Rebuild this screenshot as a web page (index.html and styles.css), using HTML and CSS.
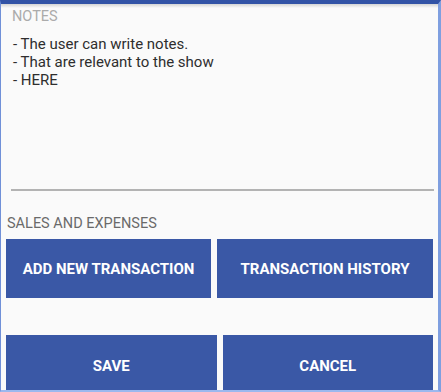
FILE: index.html
```html
<!DOCTYPE html>
<html>

<head>
    <title>Show notes</title>
    <link rel="stylesheet" href="styles.css">
</head>

<body>
    <div class="frame">
        <!-- Notes -->
        <div class="notes">
            <div class="notes-label">NOTES</div>
            <div class="notes-text">
                - The user can write notes.<br>
                - That are relevant to the show<br>
                - HERE
            </div>
            <div class="notes-line"></div>
        </div>

        <!-- Sales and expenses -->
        <div class="section-label">SALES AND EXPENSES</div>
        <div class="btn-row top-row">
            <button class="btn">ADD NEW TRANSACTION</button>
            <button class="btn">TRANSACTION HISTORY</button>
        </div>

        <div class="btn-row bottom-row">
            <button class="btn">SAVE</button>
            <button class="btn">CANCEL</button>
        </div>
    </div>
</body>

</html>
```

FILE: styles.css
```css
body {
    margin: 0;
    padding: 0;
    font-family: Roboto, "Liberation Sans", sans-serif;
    background-color: #fafafa;
}

.frame {
    width: 441px;
    height: 392px;
    box-sizing: border-box;
    border-top: 4px solid #3253a6;
    border-left: 1px solid #7090d8;
    border-right: 3px solid #7f9fe0;
    border-bottom: 2px solid #9cb8ee;
    background: linear-gradient(#d4d4d4, #fafafa) no-repeat top / 100% 4px, #fafafa;
    overflow: hidden;
}

.notes {
    padding: 0 4px 0 3px;
}

.notes-label {
    color: #ababab;
    font-size: 14.5px;
    line-height: 17px;
    padding: 4px 0 0 8px;
}

.notes-text {
    color: #2e2e2e;
    font-size: 15px;
    line-height: 18px;
    margin-top: 10px;
    padding-left: 9px;
    height: 154px;
}

.notes-line {
    margin: 0 0 0 7px;
    height: 2px;
    background-color: #b3b3b3;
}

.section-label {
    color: #6a6a6a;
    font-size: 14.5px;
    line-height: 18px;
    margin: 24px 0 0 6px;
}

.btn-row {
    display: grid;
    gap: 6px;
    padding: 0 5px 0 5px;
}

.top-row {
    grid-template-columns: 205px 1fr;
    margin-top: 6px;
}

.bottom-row {
    grid-template-columns: 1fr 1fr;
    margin-top: 37px;
}

.btn {
    height: 59px;
    border: none;
    background-color: #3a58a6;
    color: white;
    font-family: Roboto, "Liberation Sans", sans-serif;
    font-size: 15px;
    font-weight: bold;
    padding: 0;
}

.bottom-row .btn {
    height: 61px;
}
```
